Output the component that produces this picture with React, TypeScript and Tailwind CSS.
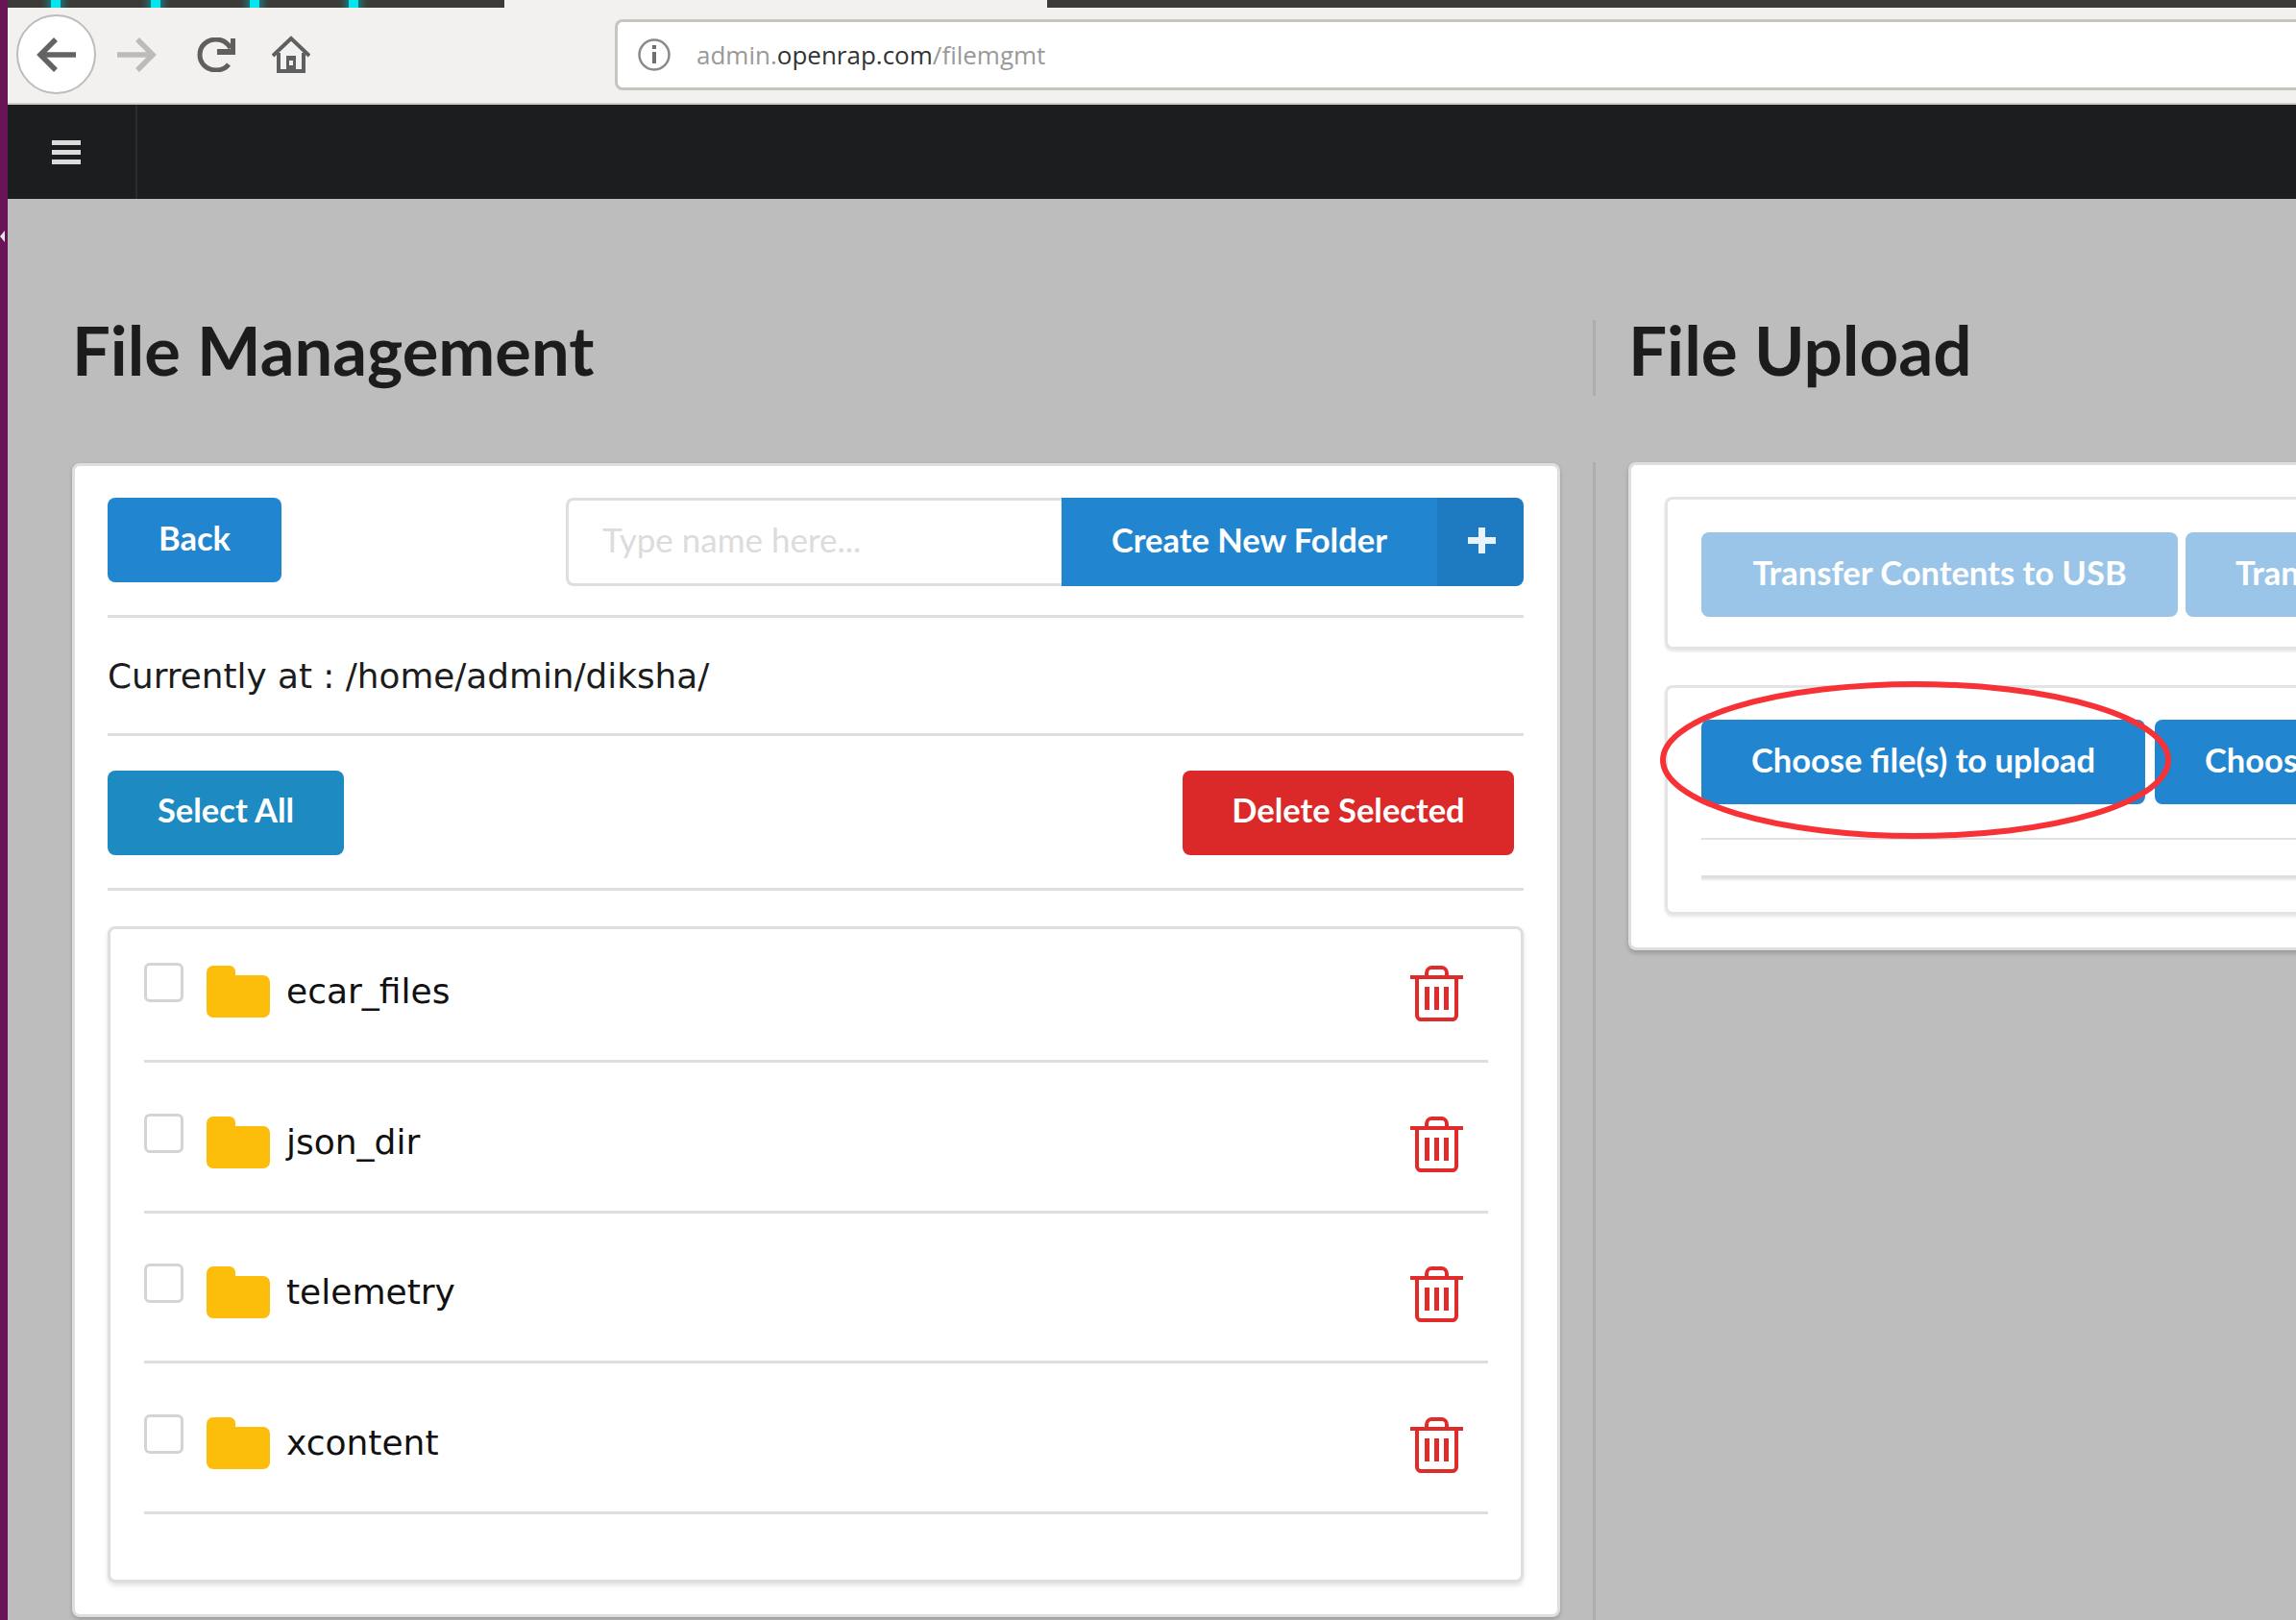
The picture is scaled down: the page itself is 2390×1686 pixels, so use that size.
const folders = ["ecar_files", "json_dir", "telemetry", "xcontent"];

function BackIcon({ color }: { color: string }) {
  return (
    <svg width="42" height="36" viewBox="0 0 42 36" fill="none" stroke={color} strokeWidth="5.5">
      <path d="M41 18H4" />
      <path d="M20 2 4 18l16 16" />
    </svg>
  );
}

function ForwardIcon() {
  return (
    <svg width="42" height="36" viewBox="0 0 42 36" fill="none" stroke="#bcbbb9" strokeWidth="5.5">
      <path d="M1 18h37" />
      <path d="M22 2l16 16-16 16" />
    </svg>
  );
}

function ReloadIcon() {
  return (
    <svg width="40" height="36" viewBox="0 0 40 36" fill="none" stroke="#5f5f5f" strokeWidth="5">
      <path d="M33 28c-3 4-8 6-13 6C10 34 3 27 3 18S10 2 20 2c7 0 12 4 15 9" />
      <path d="M21 15h17V1" strokeWidth="6" />
    </svg>
  );
}

function HomeIcon() {
  return (
    <svg width="40" height="40" viewBox="0 0 40 40" fill="none" stroke="#5f5f5f" strokeWidth="4">
      <path d="M1 21 20 3l19 18" />
      <path d="M7 18v19h26V18" />
      <path d="M15 37V21h10v16" fill="#5f5f5f" stroke="none" />
      <rect x="18" y="26" width="4" height="5" fill="#f2f1ef" stroke="none" />
    </svg>
  );
}

function InfoIcon() {
  return (
    <svg width="36" height="36" viewBox="0 0 36 36" fill="none" stroke="#8a8a8a" strokeWidth="2.5">
      <circle cx="18" cy="18" r="15.5" />
      <rect x="16" y="8" width="4" height="4" fill="#6f6f6f" stroke="none" />
      <rect x="16" y="15" width="4" height="12" fill="#6f6f6f" stroke="none" />
    </svg>
  );
}

function PlusIcon() {
  return (
    <svg width="29" height="27" viewBox="0 0 29 27" fill="#e8f2fb">
      <path d="M11 0h7v10h11v7H18v10h-7V17H0v-7h11Z" />
    </svg>
  );
}

function FolderIcon() {
  return (
    <svg width="66" height="54" viewBox="0 0 66 54" className="mt-[3px] shrink-0">
      <path d="M0 7a7 7 0 0 1 7-7h17a6 6 0 0 1 6 6v4h29a7 7 0 0 1 7 7v30a7 7 0 0 1-7 7H7a7 7 0 0 1-7-7Z" fill="#fdbd0b" />
    </svg>
  );
}

function TrashIcon() {
  return (
    <svg width="58" height="58" viewBox="0 0 58 58" fill="none" stroke="#e02b2b" strokeWidth="4" className="mt-[3px] ml-auto mr-[26px] shrink-0">
      <path d="M3 12h55" />
      <path d="M20 12V8c0-3 2-6 5-6h11c3 0 5 3 5 6v4" />
      <path d="M10 12v40c0 2 2 4 4 4h33c2 0 4-2 4-4V12" />
      <path d="M20.5 22v24M30.5 22v24M40.5 22v24" strokeWidth="5" />
    </svg>
  );
}

function Divider() {
  return <div className="h-[3px] bg-[#dedede]" />;
}

export default function App() {
  return (
    <div className="flex h-[1686px] w-[2390px] overflow-hidden bg-[#bdbdbd] font-['Lato',sans-serif]">
      {/* launcher edge */}
      <div className="relative w-2 shrink-0 bg-[#6a1458]">
        <div className="absolute left-0 top-[240px] h-0 w-0 border-y-[6px] border-r-[5px] border-y-transparent border-r-[#e8e8e8]" />
      </div>

      <div className="flex min-w-0 flex-1 flex-col">
        {/* browser tabs */}
        <div className="flex h-2 shrink-0 overflow-hidden">
          <div className="flex w-[517px] bg-[#3c3b37]">
            <div className="ml-[45px] h-2 w-[10px] bg-[#00e6ee] shadow-[0_0_7px_4px_rgba(0,170,180,0.55)]" />
            <div className="ml-[94px] h-2 w-[10px] bg-[#00e6ee] shadow-[0_0_7px_4px_rgba(0,170,180,0.55)]" />
            <div className="ml-[93px] h-2 w-[10px] bg-[#00e6ee] shadow-[0_0_7px_4px_rgba(0,170,180,0.55)]" />
            <div className="ml-[93px] h-2 w-[10px] bg-[#00e6ee] shadow-[0_0_7px_4px_rgba(0,170,180,0.55)]" />
          </div>
          <div className="w-[565px] bg-[#f2f1ef]" />
          <div className="flex-1 bg-[#3c3b37]" />
        </div>

        {/* browser toolbar */}
        <div className="flex h-[101px] shrink-0 items-center border-b-2 border-[#d0cdc9] bg-[#f2f1ef] pb-[2px]">
          <div className="ml-[9px] flex h-[83px] w-[83px] items-center justify-center rounded-full border-2 border-[#bdbcba] bg-white">
            <BackIcon color="#636363" />
          </div>
          <div className="ml-[21px]">
            <ForwardIcon />
          </div>
          <div className="ml-[42px]">
            <ReloadIcon />
          </div>
          <div className="ml-[38px]">
            <HomeIcon />
          </div>
          <div className="ml-[317px] flex h-[74px] flex-1 items-center rounded-l-lg border-y-[3px] border-l-[3px] border-[#c8c5c1] bg-white pl-[20px] font-['Open_Sans',sans-serif] text-[26px] text-[#999]">
            <InfoIcon />
            <span className="mt-[2px] ml-[26px]">
              admin.<span className="text-[#333]">openrap.com</span>/filemgmt
            </span>
          </div>
        </div>

        {/* app nav */}
        <div className="flex h-[98px] shrink-0 bg-[#1c1d1f]">
          <div className="flex w-[135px] items-center border-r-2 border-[#2a2b2d] pl-[46px]">
            <div className="flex w-[30px] flex-col gap-[5px]">
              <div className="h-[5px] bg-[#dcdcdc]" />
              <div className="h-[5px] bg-[#dcdcdc]" />
              <div className="h-[5px] bg-[#dcdcdc]" />
            </div>
          </div>
        </div>

        <div className="flex flex-1 pl-[67px]">
          {/* file management */}
          <div className="w-[1549px] shrink-0 pt-[126px]">
            <h1 className="h-[79px] text-[70.5px] leading-[62px] font-bold text-[#1c1c1c]">File Management</h1>
            <div className="mt-[70px] h-[1201px] rounded-lg border-[3px] border-[#dedede] bg-white pt-[33px] pr-[35px] pl-[34px] shadow-[0_2px_4px_rgba(0,0,0,0.2)]">
              <div className="flex items-start justify-between pb-[30px]">
                <button className="h-[88px] w-[181px] rounded-lg bg-[#2185d0] pb-1 text-[34.5px] font-bold text-white">Back</button>
                <div className="flex h-[92px] w-[997px]">
                  <input
                    placeholder="Type name here..."
                    className="h-full w-[516px] rounded-l-lg border-[3px] border-r-0 border-[#dedede] bg-white pb-[6px] pl-[35px] text-[35px] outline-none placeholder:text-[#dddbdb]"
                  />
                  <button className="h-full w-[391px] bg-[#2185d0] pb-[4px] text-[34.5px] font-bold text-white">Create New Folder</button>
                  <div className="flex w-[90px] items-center justify-center rounded-r-lg bg-[#1f7bc1] pb-[3px] pl-[2px]">
                    <PlusIcon />
                  </div>
                </div>
              </div>
              <Divider />
              <div className="flex h-[120px] items-center pt-[2px] font-['DejaVu_Sans',sans-serif] text-[35.8px] text-[#1c1c1c]">
                Currently at : /home/admin/diksha/
              </div>
              <Divider />
              <div className="flex items-start justify-between pt-[36px] pr-[10px] pb-[34px]">
                <button className="h-[88px] w-[246px] rounded-lg bg-[#1e8ac2] pb-[6px] text-[34.5px] font-bold text-white">Select All</button>
                <button className="h-[88px] w-[345px] rounded-lg bg-[#db2828] pb-[6px] text-[34.5px] font-bold text-white">Delete Selected</button>
              </div>
              <Divider />

              <div className="mt-[37px] flex h-[683px] flex-col gap-[52.67px] rounded-lg border-[3px] border-[#dedede] bg-white pt-[35px] pr-[34px] pl-[35px] shadow-[0_3px_5px_rgba(0,0,0,0.12)]">
                {folders.map((name) => (
                  <div key={name} className="flex items-start border-b-[3px] border-[#dedede] pb-[40px]">
                    <div className="h-[41px] w-[41px] shrink-0 rounded-md border-[3px] border-[#d4d4d5] bg-white" />
                    <div className="ml-[24px]">
                      <FolderIcon />
                    </div>
                    <span className="mt-[6px] ml-[17px] font-['DejaVu_Sans',sans-serif] text-[36px] leading-[48px] text-[#111]">{name}</span>
                    <TrashIcon />
                  </div>
                ))}
              </div>
            </div>
          </div>

          {/* file upload */}
          <div className="ml-[34px] flex w-[800px] shrink-0 flex-col pt-[126px]">
            <h1 className="h-[79px] border-l-[3px] border-[#adadad] pl-[34px] text-[71px] leading-[62px] font-bold text-[#1c1c1c]">File Upload</h1>
            <div className="mt-[69px] flex-1 border-l-[3px] border-[#adadad] pl-[34px]">
              <div className="h-[508px] rounded-l-lg border-y-[3px] border-l-[3px] border-[#dedede] bg-white pt-[33px] pl-[35px] shadow-[0_3px_5px_rgba(0,0,0,0.2)]">
                <div className="h-[159px] rounded-l-lg border-y-[3px] border-l-[3px] border-[#e4e4e4] pt-[34px] pl-[35px] shadow-[0_2px_3px_rgba(0,0,0,0.1)]">
                  <div className="flex gap-2">
                    <button className="h-[88px] w-[496px] shrink-0 rounded-lg bg-[#9ac5e9] pb-1 text-[34.5px] font-bold text-white">Transfer Contents to USB</button>
                    <button className="h-[88px] shrink-0 rounded-lg bg-[#9ac5e9] px-[52px] pb-1 text-[34.5px] font-bold text-white">Transfer Contents from USB</button>
                  </div>
                </div>
                <div className="relative mt-[37px] h-[239px] rounded-l-lg border-y-[3px] border-l-[3px] border-[#e4e4e4] pt-[33px] pl-[35px] shadow-[0_2px_3px_rgba(0,0,0,0.1)]">
                  <div className="flex gap-[10px]">
                    <button className="h-[88px] w-[462px] shrink-0 rounded-lg bg-[#2185d0] pb-1 text-[34.5px] font-bold text-white">Choose file(s) to upload</button>
                    <button className="h-[88px] shrink-0 rounded-lg bg-[#2185d0] px-[52px] pb-1 text-[34.5px] font-bold text-white">Choose folder to upload</button>
                  </div>
                  <div className="mt-[35px] h-[2px] bg-[#e2e2e2]" />
                  <div className="mt-[37px] h-[3px] bg-[#dedede] shadow-[0_2px_2px_rgba(0,0,0,0.1)]" />
                  {/* hand-drawn marker over the button */}
                  <svg width="536" height="170" viewBox="0 0 536 170" fill="none" className="absolute -top-[10px] -left-[10px]">
                    <ellipse cx="268" cy="85" rx="263" ry="79" stroke="#f63236" strokeWidth="6" />
                  </svg>
                </div>
              </div>
            </div>
          </div>
        </div>
      </div>
    </div>
  );
}
